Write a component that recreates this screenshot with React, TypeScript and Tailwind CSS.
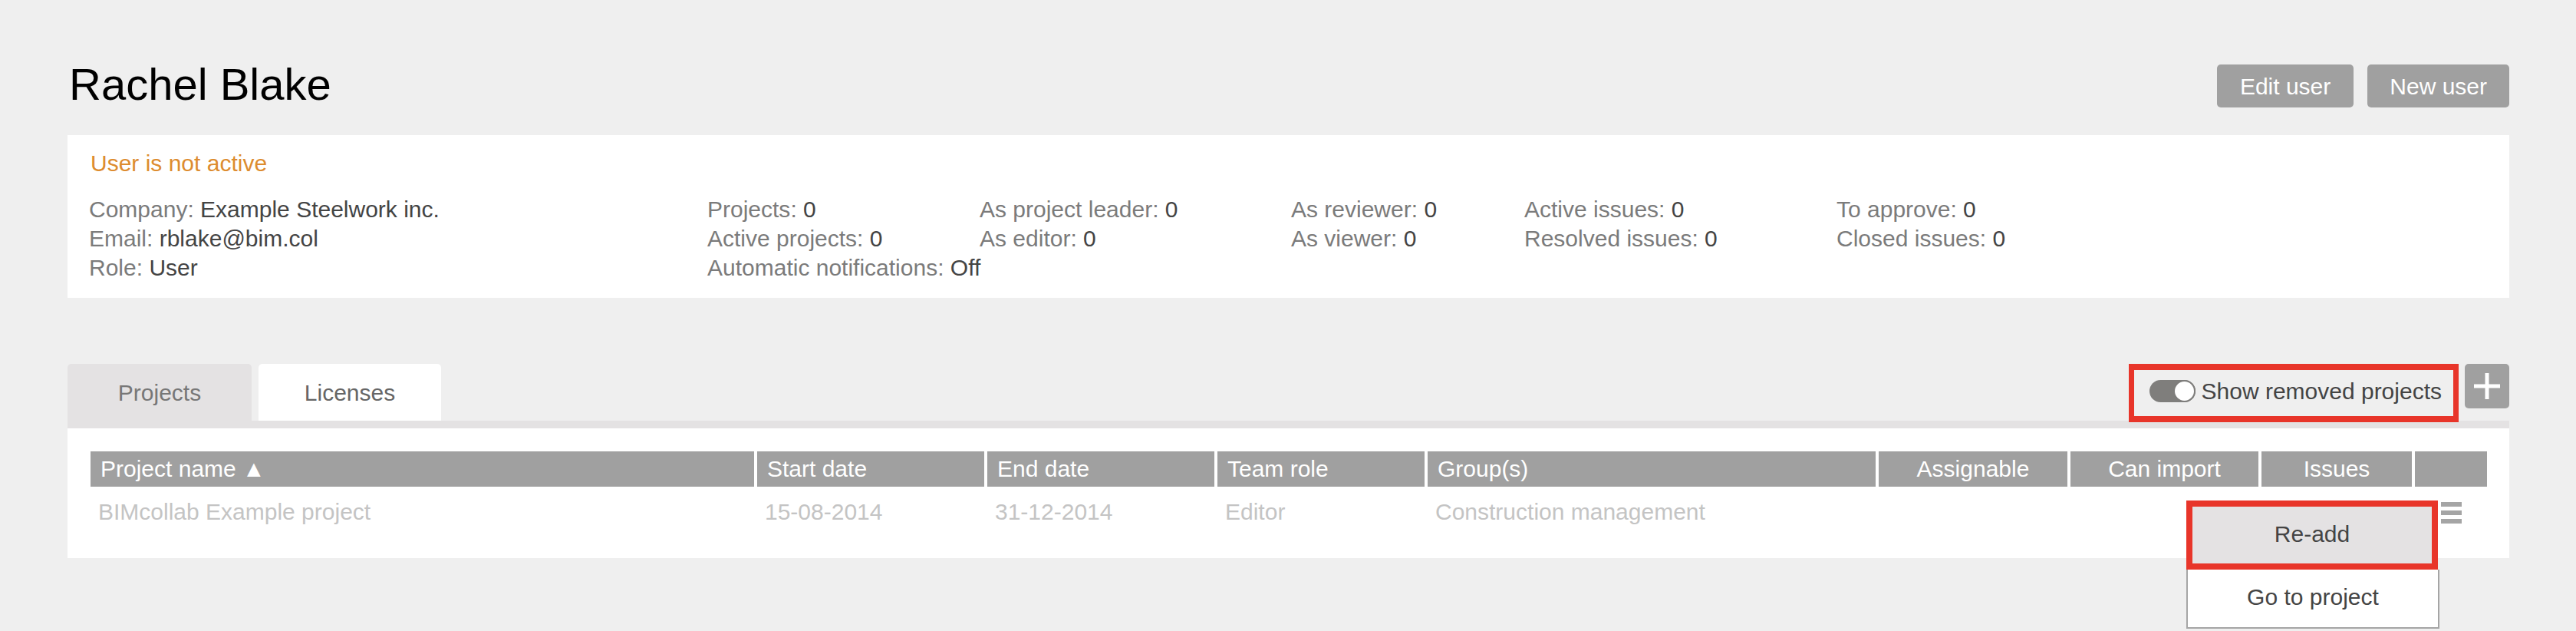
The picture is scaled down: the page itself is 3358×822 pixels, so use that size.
import React from 'react';

const infoRows: { label: string; value: string; span?: boolean }[][] = [
  [
    { label: 'Company', value: 'Example Steelwork inc.' },
    { label: 'Projects', value: '0' },
    { label: 'As project leader', value: '0' },
    { label: 'As reviewer', value: '0' },
    { label: 'Active issues', value: '0' },
    { label: 'To approve', value: '0' },
  ],
  [
    { label: 'Email', value: 'rblake@bim.col' },
    { label: 'Active projects', value: '0' },
    { label: 'As editor', value: '0' },
    { label: 'As viewer', value: '0' },
    { label: 'Resolved issues', value: '0' },
    { label: 'Closed issues', value: '0' },
  ],
  [
    { label: 'Role', value: 'User' },
    { label: 'Automatic notifications', value: 'Off', span: true },
  ],
];

const columns = [
  { label: 'Project name ▲', center: false },
  { label: 'Start date', center: false },
  { label: 'End date', center: false },
  { label: 'Team role', center: false },
  { label: 'Group(s)', center: false },
  { label: 'Assignable', center: true },
  { label: 'Can import', center: true },
  { label: 'Issues', center: true },
  { label: '', center: false },
];

const rowCells = ['BIMcollab Example project', '15-08-2014', '31-12-2014', 'Editor', 'Construction management', '', '', ''];

function Stat({ label, value, span }: { label: string; value: string; span?: boolean }) {
  return (
    <div className={`whitespace-nowrap ${span ? 'col-span-2' : ''}`}>
      <span className="text-[#7b7b7b]">{label}: </span>
      <span className="text-[#444]">{value}</span>
    </div>
  );
}

export default function App() {
  return (
    <div className="min-h-screen bg-[#efefef] px-[87px] pl-[88px] pt-[81px] font-['Liberation_Sans',Arial,sans-serif] text-[30px]">
      {/* Header */}
      <div className="flex items-start justify-between">
        <h1 className="text-[58px] leading-[58px] text-black pl-[2px]">Rachel Blake</h1>
        <div className="flex gap-[18px] mt-[3px]">
          <button className="h-[56px] px-[30px] rounded-[5px] bg-[#a0a0a0] text-white text-[30px]">Edit user</button>
          <button className="h-[56px] px-[29px] rounded-[5px] bg-[#a0a0a0] text-white text-[30px]">New user</button>
        </div>
      </div>

      {/* User info */}
      <div className="mt-[36px] bg-white pl-[28px] pt-[18px] pb-[20px] leading-[38px]">
        <div className="text-[#dd8c2f] pl-[2px] mb-[22px]">User is not active</div>
        <div className="grid grid-cols-[806px_355px_406px_304px_407px_1fr]">
          {infoRows.map((row, i) => (
            <React.Fragment key={i}>
              {row.map((s) => (
                <Stat key={s.label} {...s} />
              ))}
              {row.length < 6 && <div className="col-span-3" />}
            </React.Fragment>
          ))}
        </div>
      </div>

      {/* Tabs */}
      <div className="mt-[86px] flex items-start justify-between">
        <div className="flex gap-[9px]">
          <div className="w-[240px] h-[74px] rounded-t-[5px] bg-[#e4e2e3] text-[#777] flex items-center justify-center">Projects</div>
          <div className="w-[238px] h-[74px] rounded-t-[5px] bg-white text-[#666] flex items-center justify-center">Licenses</div>
        </div>
        <div className="flex items-start gap-[8px]">
          <div className="relative z-10 h-[76px] -mb-[2px] border-y-[8px] border-x-[7px] border-[#e8352a] pl-[20px] pr-[15px] pb-[6px] flex items-center gap-[8px]">
            <div className="w-[60px] h-[29px] rounded-full bg-[#7f7e7c] flex justify-end">
              <div className="w-[29px] h-[29px] rounded-full bg-white border-[2px] border-[#7f7e7c]" />
            </div>
            <span className="text-[#444] whitespace-nowrap">Show removed projects</span>
          </div>
          <button className="w-[58px] h-[58px] rounded-[5px] bg-[#a0a0a0] flex items-center justify-center">
            <svg width="34" height="34" viewBox="0 0 34 34">
              <rect x="14.5" y="0" width="5" height="34" fill="white" />
              <rect x="0" y="14.5" width="34" height="5" fill="white" />
            </svg>
          </button>
        </div>
      </div>
      <div className="h-[10px] bg-[#e4e2e3]" />

      {/* Projects table */}
      <div className="bg-white pl-[30px] pr-[29px] pt-[30px] pb-[41px]">
        <div className="grid grid-cols-[1fr_296px_296px_270px_584px_246px_245px_196px_94px] gap-x-[4px]">
          {columns.map((c, i) => (
            <div
              key={i}
              className={`h-[46px] leading-[46px] bg-[#a0a0a0] text-white whitespace-nowrap ${c.center ? 'text-center' : 'pl-[13px]'}`}
            >
              {c.label}
            </div>
          ))}
          {rowCells.map((t, i) => (
            <div key={i} className="pt-[14px] pl-[10px] leading-[38px] text-[#c4c4c4] whitespace-nowrap">
              {t}
            </div>
          ))}
          <div className="relative pt-[20px] flex justify-center">
            <div className="flex flex-col gap-[5px]">
              <div className="w-[27px] h-[6px] bg-[#a5a5a5]" />
              <div className="w-[27px] h-[6px] bg-[#a5a5a5]" />
              <div className="w-[27px] h-[6px] bg-[#a5a5a5]" />
            </div>
            {/* Row menu */}
            <div className="absolute right-[62px] top-[18px] w-[330px] z-20">
              <div className="w-[328px] h-[90px] border-[8px] border-[#e8352a] bg-[#e4e2e3] text-[#444] flex items-center justify-center pb-[4px]">
                Re-add
              </div>
              <div className="h-[77px] border-x-[2px] border-b-[2px] border-[#a5a5a5] bg-white text-[#444] flex items-center justify-center pb-[4px]">
                Go to project
              </div>
            </div>
          </div>
        </div>
      </div>
    </div>
  );
}
